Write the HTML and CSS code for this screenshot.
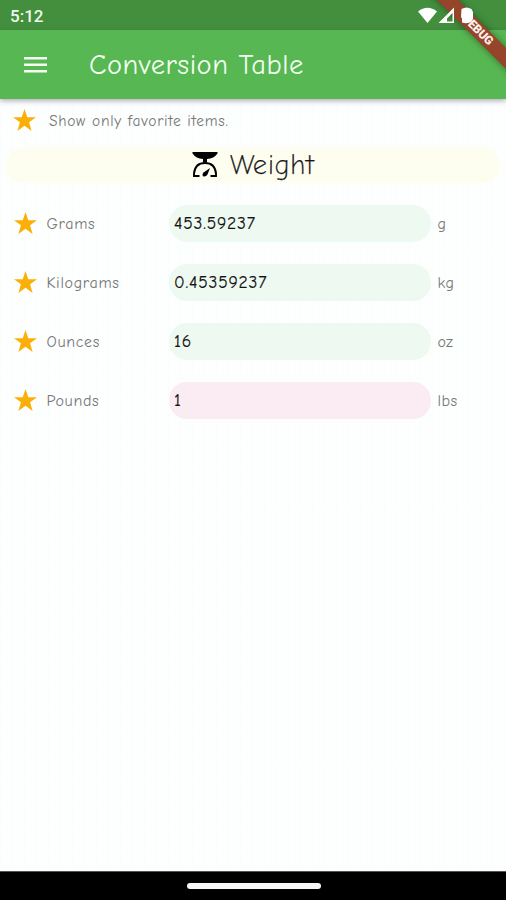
FILE: index.html
```html
<!DOCTYPE html>
<html lang="en">
<head>
<meta charset="utf-8">
<title>Conversion Table</title>
<link rel="stylesheet" href="styles.css">
</head>
<body>
<svg class="defs" aria-hidden="true"><symbol id="star" viewBox="0 0 24 24"><path d="M12 0 14.9 8.5H24L16.8 13.9 19.4 23 12 17.6 4.6 23 7.2 13.9 0 8.5H9.1Z"/></symbol></svg>
<div class="app">
  <div class="status">
    <span class="time">5:12</span>
    <svg class="signals" width="60" height="20" viewBox="0 0 60 20">
      <path d="M0 6.500Q9.500-1 19 6.500L9.500 18Z"/>
      <path fill-rule="evenodd" d="M20.500 18 36 2.500V18ZM29 16.500H34.500V8L29 13.500Z"/>
      <path d="M43.500 4Q48.500 1 53.500 4L55 7V14L53 17Q49 19 44 17.500V13.500L43 12Z"/>
    </svg>
  </div>
  <header class="bar">
    <svg class="menu" width="23" height="16" viewBox="0 0 23 16"><path d="M0 0H23V2.600H0ZM0 6.500H23V9.100H0ZM0 13H23V15.600H0Z"/></svg>
    <h1>Conversion Table</h1>
  </header>
  <main>
    <div class="filter"><svg class="star"><use href="#star"/></svg><span>Show only favorite items.</span></div>
    <h2>
      <svg width="26" height="26" viewBox="0 0 26 26"><path d="M.500 0H25.500V1.500Q22 6.500 15 7V10.500H11V7Q4 6.500 .500 1.500Z"/><path d="M7.500 24H2V21.500Q3 11 13 11T24 21.500V24H18.500" fill="none" stroke="#000" stroke-width="1.900"/><path d="M18 16 15.500 22.500Q14 25 11.500 24.500 9.500 23 11.500 20.500Z"/></svg>
      <span>Weight</span>
    </h2>
    <div class="rows">
      <div class="row"><svg class="star"><use href="#star"/></svg><span class="name">Grams</span><div class="value">453.59237</div><span class="unit">g</span></div>
      <div class="row"><svg class="star"><use href="#star"/></svg><span class="name">Kilograms</span><div class="value">0.45359237</div><span class="unit">kg</span></div>
      <div class="row"><svg class="star"><use href="#star"/></svg><span class="name">Ounces</span><div class="value">16</div><span class="unit">oz</span></div>
      <div class="row"><svg class="star"><use href="#star"/></svg><span class="name">Pounds</span><div class="value active">1</div><span class="unit">lbs</span></div>
    </div>
  </main>
  <footer><div class="handle"></div></footer>
  <div class="ribbon"><span>DEBUG</span></div>
</div>
</body>
</html>
```
FILE: styles.css
```css
* { box-sizing: border-box; }
body { margin: 0; }
.defs { position: absolute; width: 0; height: 0; }
.app {
  position: relative;
  width: 506px;
  height: 900px;
  overflow: hidden;
  display: flex;
  flex-direction: column;
  font-family: "Comic Neue", Lato, sans-serif;
}
.status {
  height: 30px;
  flex: none;
  background: #438f3e;
  color: #fff;
  display: flex;
  justify-content: space-between;
  padding: 5px 28px 0 10px;
}
.time { font: 500 17px/22px Roboto, sans-serif; color: #effaed; }
.signals { fill: #fff; position: relative; z-index: 3; }
.bar {
  height: 69px;
  flex: none;
  background: #57b752;
  display: flex;
  align-items: center;
  padding-left: 23.5px;
  box-shadow: 0 2px 5px rgba(60, 50, 80, .4);
  position: relative;
}
.menu { fill: #f4fff2; }
h1 {
  margin: 0 0 0 42.5px;
  color: #f2fff0;
  font-size: 28.5px;
  line-height: 36px;
  font-weight: 400;
  letter-spacing: .5px;
  white-space: nowrap;
}
main {
  flex: 1;
  padding: 8px 6px 0;
  background-color: #fdfffe;
  background-image:
    repeating-linear-gradient(90deg, rgba(60, 120, 130, .012) 0 1px, transparent 1px 12px),
    repeating-linear-gradient(0deg, rgba(60, 120, 130, .012) 0 1px, transparent 1px 12px);
}
.star { width: 23px; height: 23px; fill: #fbb009; flex: none; }
.filter {
  height: 27px;
  display: flex;
  align-items: center;
  gap: 13px;
  padding-left: 7px;
  color: #777;
  font-size: 15.5px;
  letter-spacing: .72px;
}
h2 {
  height: 36px;
  margin: 13px 0 0;
  border-radius: 18px;
  background: rgba(255, 253, 226, .5);
  display: flex;
  align-items: center;
  justify-content: center;
  gap: 12px;
  font-size: 28px;
  line-height: 36px;
  letter-spacing: .4px;
  color: #181818;
}
h2 span { font-weight: 300; -webkit-text-stroke: .25px #181818; }
.rows { padding-top: 22px; display: grid; row-gap: 22px; }
.row {
  height: 37px;
  display: grid;
  grid-template-columns: 33px 122px 262px 60px;
  align-items: center;
  padding-left: 7.5px;
}
.name, .unit {
  color: #777;
  font-size: 16px;
  line-height: 20px;
  padding-top: 1px;
  letter-spacing: .65px;
}
.unit { padding-left: 7px; letter-spacing: .5px; }
.value {
  height: 37px;
  border-radius: 18px;
  background: rgba(227, 244, 232, .58);
  padding-left: 5.5px;
  line-height: 36px;
  font-size: 17.5px;
  letter-spacing: .8px;
  color: #111;
  -webkit-text-stroke: .15px #111;
}
.active { background: rgba(251, 225, 236, .64); }
footer {
  height: 29px;
  flex: none;
  background: #000;
  border-top: 1px solid #555;
  display: flex;
  justify-content: center;
  padding-top: 11px;
}
.handle { width: 134px; height: 6px; margin-left: 1px; border-radius: 3px; background: #f8f6f8; }
.ribbon {
  position: absolute;
  z-index: 2;
  left: 409px;
  top: 24px;
  width: 140px;
  height: 15px;
  transform: rotate(45deg);
  background: #94452a;
  box-shadow: 0 0 7px rgba(0, 0, 0, .4);
  text-align: center;
  padding-right: 4px;
  font: 900 12px/15px Roboto, sans-serif;
  letter-spacing: -.2px;
  color: #fff0ec;
}
```
